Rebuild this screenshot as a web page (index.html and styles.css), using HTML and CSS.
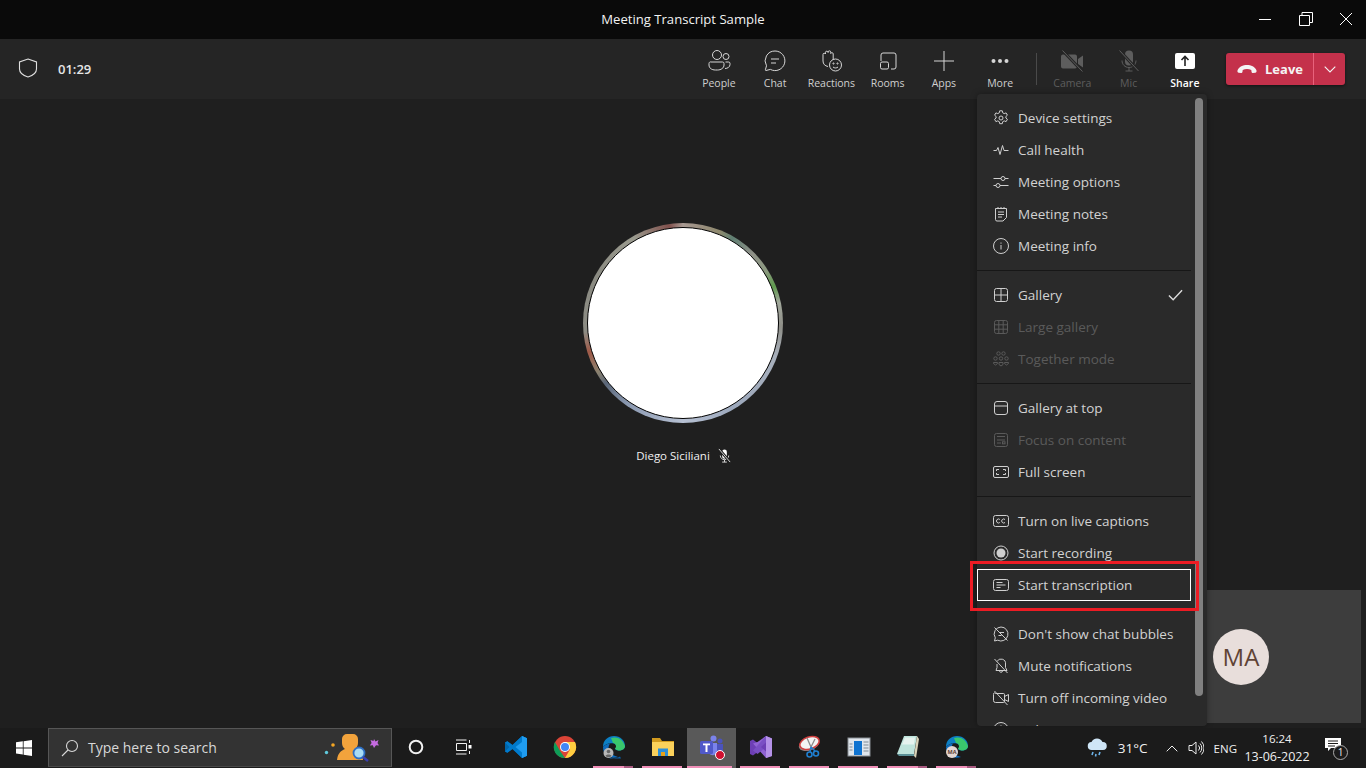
FILE: index.html
```html
<!DOCTYPE html>
<html lang="en">
<head>
<meta charset="utf-8">
<title>Meeting Transcript Sample</title>
<link rel="stylesheet" href="styles.css">
</head>
<body>
<div class="app">
  <header class="titlebar">
    <div class="title">Meeting Transcript Sample</div>
    <div class="winctl">
      <svg class="wi" viewBox="0 0 14 14"><path d="M1 7.500h12"/></svg>
      <svg class="wi" viewBox="0 0 14 14"><path d="M.5 3.500h10v10H.5zM3 3.500V.5h10.500v10h-3"/></svg>
      <svg class="wi" viewBox="0 0 14 14"><path d="M1 1l12 12M13 1L1 13"/></svg>
    </div>
  </header>

  <nav class="toolbar">
    <svg class="shield" viewBox="0 0 20 20"><path d="M10 1l8.500 3v7c0 3.500-3.500 6.500-8.500 8c-5-1.500-8.500-4.500-8.500-8V4z"/></svg>
    <span class="timer">01:29</span>
    <div class="tools">
      <button class="tool">
        <svg class="ti" viewBox="0 0 24 24"><circle cx="10" cy="6" r="4.500"/><circle cx="19" cy="7.500" r="3"/><path d="M4 13h11.500a1.500 1.500 0 0 1 1.500 1.500v1.500c0 3-3 5-6.500 5h-2c-4 0-6.500-2-6.500-5v-1.500A1.500 1.500 0 0 1 4 13z"/><path d="M18.500 13h3a1.500 1.500 0 0 1 1.500 1.500v1c0 2.500-2.500 4-5 4"/></svg>
        <span>People</span>
      </button>
      <button class="tool">
        <svg class="ti" viewBox="0 0 24 24"><path d="M12 2a9.800 9.800 0 1 1-4.600 18.400L3 21.500c-.5 0-.8-.3-.6-.8l1.100-3.900A9.800 9.800 0 0 1 12 2z"/><path d="M8 10h8M8 14h5"/></svg>
        <span>Chat</span>
      </button>
      <button class="tool">
        <svg class="ti" viewBox="0 0 24 24"><path d="M4 7V5.500a1.300 1.300 0 0 1 2.500-.5V3.500a1.300 1.300 0 0 1 2.600 0V3a1.300 1.300 0 0 1 2.600.3v1.200a1.300 1.300 0 0 1 2.500.3V11"/><path d="M4 7v5c0 3 2 5 5 5.500" /><circle cx="16.500" cy="16" r="6"/><path d="M14 18c1.500 1.300 3.500 1.300 5 0"/><circle cx="14.500" cy="14.500" r=".6"/><circle cx="18.500" cy="14.500" r=".6"/></svg>
        <span>Reactions</span>
      </button>
      <button class="tool">
        <svg class="ti" viewBox="0 0 24 24"><path d="M5 12V6a2 2 0 0 1 2-2h11a2 2 0 0 1 2 2v12a2 2 0 0 1-2 2h-3"/><rect x="4.500" y="13" width="8" height="7" rx="1.500"/></svg>
        <span>Rooms</span>
      </button>
      <button class="tool">
        <svg class="ti" viewBox="0 0 24 24"><path d="M12 2v20M2 12h20"/></svg>
        <span>Apps</span>
      </button>
      <button class="tool">
        <svg class="ti" viewBox="0 0 24 24"><circle class="dot" cx="5.500" cy="12" r="2"/><circle class="dot" cx="12" cy="12" r="2"/><circle class="dot" cx="18.500" cy="12" r="2"/></svg>
        <span>More</span>
      </button>
      <div class="tsep"></div>
      <button class="tool off">
        <svg class="ti" viewBox="0 0 24 24"><path class="fill" d="M3 5.500h12a2 2 0 0 1 2 2v10a2 2 0 0 1-2 2H3a2 2 0 0 1-2-2v-10a2 2 0 0 1 2-2zM18 10l5-3.500v12L18 15z"/><path class="gap" d="M2.500 1.500l20 21"/><path d="M2.500 1.500l20 21"/></svg>
        <span>Camera</span>
      </button>
      <button class="tool off">
        <svg class="ti" viewBox="0 0 24 24"><path class="fill" d="M8 5.500a4 4 0 0 1 8 0v7a4 4 0 0 1-8 0z"/><path d="M5 11.500c0 4 3 7 7 7s7-3 7-7M12 18.500V22M8.500 22h7"/><path class="gap" d="M2.500 1.500l19 20.500"/><path d="M2.500 1.500l19 20.500"/></svg>
        <span>Mic</span>
      </button>
      <button class="tool on">
        <svg class="ti" viewBox="0 0 24 24"><rect class="wfill" x="2" y="4" width="20" height="16" rx="2"/><path class="arrow" d="M12 17V8M8.500 11L12 7.500l3.500 3.500"/></svg>
        <span>Share</span>
      </button>
    </div>
    <div class="leave">
      <div class="leave-main">
        <svg class="phone" viewBox="0 0 20 10"><path d="M.5 6.500C2 2.500 6 1 10 1s8 1.500 9.500 5.500c.3 1-.2 2-1.200 2.200l-2.300.3c-.8 0-1.400-.5-1.500-1.300l-.2-1.700C13 5.300 11.500 5 10 5s-3 .3-4.300 1l-.2 1.700C5.400 8.500 4.800 9 4 9l-2.300-.3C.7 8.500.2 7.500.5 6.500z"/></svg>
        <span>Leave</span>
      </div>
      <div class="leave-more"><svg class="chev" viewBox="0 0 12 7"><path d="M.7.700L6 6l5.300-5.300"/></svg></div>
    </div>
  </nav>

  <main class="stage">
    <div class="ring"><div class="disc"></div></div>
    <div class="name">
      <span>Diego Siciliani</span>
      <svg class="namemic" viewBox="0 0 16 16"><path class="wfill" d="M5.500 4a2.500 2.500 0 0 1 5 0v5a2.500 2.500 0 0 1-5 0z"/><path d="M3.500 8c0 2.500 2 4.500 4.500 4.500s4.500-2 4.500-4.500M8 12.500V15M5.500 15h5"/><path class="gapname" d="M2 1l12 14"/><path d="M2 1l12 14"/></svg>
    </div>
  </main>

  <footer class="taskbar">
    <button class="start">
      <svg viewBox="0 0 16 16" class="winlogo"><path d="M0 2.300l6.800-1v6.200H0zM7.600 1.200L16 0v7.500H7.600zM0 8.400h6.800v6.200l-6.800-1zM7.600 8.400H16V16l-8.400-1.200z"/></svg>
    </button>
    <div class="search">
      <svg class="mag" viewBox="0 0 18 18"><circle cx="11" cy="7" r="5.500"/><path d="M7 11l-6 6"/></svg>
      <span class="stext">Type here to search</span>
      <svg class="illus" viewBox="0 0 56 30">
        <circle cx="2.500" cy="19.500" r="1.700" fill="#5fc9dc"/>
        <circle cx="9" cy="12" r="1.800" fill="#f4a623"/>
        <path d="M50 6l1.500 2.500L54.500 7l-1 3 1.500 2.500-3-.2L50 15l-1.200-2.800-3 .2 1.800-2.500L46.500 7l3 1z" fill="#c56be0"/>
        <path d="M23 1h6a5 5 0 0 1 5 5v4c0 3-1.500 5-3 6c3 1.500 7 3 8 11H13c1-8 5-9.500 8-11c-1.500-1-3-3-3-6V6a5 5 0 0 1 5-5z" fill="#f2a33c"/>
        <circle cx="35" cy="20" r="5.500" fill="#a9dcf5" stroke="#2e6fc4" stroke-width="1.800"/>
        <path d="M39 24l5 4" stroke="#3a3fb0" stroke-width="2.500" fill="none"/>
      </svg>
    </div>
    <button class="tb wide"><svg class="cort" viewBox="0 0 16 16"><circle cx="8" cy="8" r="6.300"/></svg></button>
    <button class="tb wide"><svg class="tview" viewBox="0 0 18 16"><path d="M1 1h10.500M1 15h10.500M1.500 4.500h10v7h-10zM14.500 1v3M14.500 12v3"/><rect class="wfill" x="13.500" y="6" width="3" height="3.500"/></svg></button>
    <div class="apps">
      <button class="tb">
        <svg class="ai" viewBox="0 0 24 24"><path fill="#0065a9" d="M23 3.200L18 1 8.500 10 3.400 6.200 1 7.500v9l2.400 1.300 5.100-3.800L18 23l5-2.200z"/><path fill="#007acc" d="M18 1L8.500 10 3.400 6.200 1 7.500l4.500 4.500L1 16.500l2.400 1.300 5.100-3.800L18 23l5-2.200V3.200z"/><path fill="#1f9cf0" d="M18 1l5 2.200v17.600L18 23V7l-6.500 5 6.500 5.500z"/></svg>
      </button>
      <button class="tb">
        <svg class="ai" viewBox="0 0 24 24"><circle cx="12" cy="12" r="11" fill="#db4437"/><path fill="#0f9d58" d="M1.900 7l5.500 9.500 4.600 6.500A11 11 0 0 1 1.900 7z"/><path fill="#ffcd40" d="M12 7h10a11 11 0 0 1-10 16l5-8.500z"/><circle cx="12" cy="12" r="5" fill="#fff"/><circle cx="12" cy="12" r="4" fill="#4285f4"/></svg>
      </button>
      <button class="tb run multi">
        <svg class="ai" viewBox="0 0 24 24"><path fill="#0c7fc4" d="M1 12C1 5 6 1 12 1c6.500 0 11 4.500 11 10 0 3-3 4.500-6 4.500-2.500 0-4-1-4-2 2-.5 2-4-1-5C7 7.500 3.500 9 1 12z"/><path fill="#3ac76d" d="M9 3c6-2 12 1 14 8 0 3-3 4.500-6 4.500-1 0-3-.5-4-2 2-1.500 1-5-2-5.500z"/><path fill="#0b5ea8" d="M5 21c3 2.500 9 3 13 .5l1 2H8z"/><path fill="#0f6cbd" d="M1 12c3-3 5-3.500 7-3.500-3 4-2 11 8 13.500-6 2-15 0-15-10z"/><circle cx="6.500" cy="18" r="5" fill="#b8b8b8"/><circle cx="6.500" cy="16.500" r="1.800" fill="#666"/><path fill="#666" d="M3.500 21c.5-2 5.500-2 6 0a4 4 0 0 1-6 0z"/></svg>
      </button>
      <button class="tb run">
        <svg class="ai" viewBox="0 0 24 24"><path fill="#d29b1f" d="M1 3h8l2 3h12v4H1z"/><path fill="#fbd15b" d="M1 7h22v14H1z"/><path fill="#2d8fd8" d="M7 13.500h10V21h-3v-4h-4v4H7z"/><path fill="#e6a21a" d="M10 17h4v4h-4z"/></svg>
      </button>
      <button class="tb run active">
        <svg class="ai" viewBox="0 0 24 24"><circle cx="13.500" cy="3.500" r="3" fill="#7b83eb"/><circle cx="20" cy="6" r="2.500" fill="#4b53bc"/><path fill="#7b83eb" d="M8 8h9v10a5 5 0 0 1-9-2z"/><path fill="#4b53bc" d="M17 9h6v6.500a3.500 3.500 0 0 1-6 .5z"/><rect x="0" y="6" width="13" height="13" rx="1.500" fill="#5059c9"/><path fill="#fff" d="M3 8.500h7v1.800H7.500V17h-2v-6.700H3z"/></svg>
        <span class="rec"></span>
      </button>
      <button class="tb run">
        <svg class="ai" viewBox="0 0 24 24"><path fill="#6d3fb5" d="M8.500 17L4 20.500 1 19V6l3-1.500L8.500 8z"/><path fill="#9063d3" d="M17 1l6 2.500v17.500L17 23 4 8.500 8.500 7z"/><path fill="#7a4fc4" d="M17 1L4 15.500 8.500 19 17 12z"/><path fill="#b592e8" d="M17 1l6 2.500v17.500L17 23z"/><path fill="#6d3fb5" d="M17 7.500l-5 4.500 5 4.500z"/></svg>
      </button>
      <button class="tb run">
        <svg class="ai" viewBox="0 0 24 24"><ellipse cx="11" cy="9.500" rx="10.500" ry="6" fill="#8d8583" transform="rotate(-18 11 9.500)"/><ellipse cx="11.500" cy="8" rx="10" ry="6" fill="#f4f4f4" stroke="#d04040" stroke-width="1.500" transform="rotate(-18 11.500 8)"/><path d="M9 3l4 9M17 4l-4 8" stroke="#8b8b8b" stroke-width="1.300" fill="none"/><path d="M13 12l-1 5M13 12l4 4" stroke="#1f7fd0" stroke-width="1.500" fill="none"/><circle cx="11.500" cy="19.500" r="2.500" fill="none" stroke="#1f7fd0" stroke-width="1.600"/><circle cx="18" cy="18.500" r="2.500" fill="none" stroke="#1f7fd0" stroke-width="1.600"/></svg>
      </button>
      <button class="tb run">
        <svg class="ai" viewBox="0 0 24 24"><rect x="1" y="3" width="22" height="18" fill="#e0e6ec" stroke="#8a8f95"/><rect x="7" y="6" width="8" height="14" fill="#0f73d0"/><path d="M16.500 7h5M16.500 10h5M16.500 13h5M16.500 16h5M2.500 9h3M2.500 12h3M2.500 15h3" stroke="#7f8b96" fill="none"/></svg>
      </button>
      <button class="tb run multi">
        <svg class="ai" viewBox="0 0 24 24"><path fill="#bfe4dc" d="M8 1h13l-3 18H1z"/><path fill="#5b8f96" d="M1 19h17l1 2H3z"/><path fill="#e6f3ef" d="M9 2.500h10l-1 7H6z"/><path fill="#d8d2b8" d="M18 21l3-20 2 3-3 19z"/></svg>
      </button>
      <button class="tb run multi">
        <svg class="ai" viewBox="0 0 24 24"><path fill="#0c7fc4" d="M1 12C1 5 6 1 12 1c6.500 0 11 4.500 11 10 0 3-3 4.500-6 4.500-2.500 0-4-1-4-2 2-.5 2-4-1-5C7 7.500 3.500 9 1 12z"/><path fill="#3ac76d" d="M9 3c6-2 12 1 14 8 0 3-3 4.500-6 4.500-1 0-3-.5-4-2 2-1.500 1-5-2-5.500z"/><path fill="#0f6cbd" d="M1 12c3-3 5-3.500 7-3.500-3 4-2 11 8 13.500-6 2-15 0-15-10z"/><circle cx="7" cy="17" r="6" fill="#e4d8d4"/><text class="mini" x="7" y="19" text-anchor="middle">MA</text></svg>
      </button>
    </div>
    <div class="tray">
      <svg class="weather" viewBox="0 0 22 22"><path fill="#cfe6f7" d="M6 13a4 4 0 0 1-.5-8A6 6 0 0 1 16.500 5 4 4 0 0 1 17 13z"/><path d="M7 15l-1 3M14 15l-1 3M10 17l-.5 2.500" stroke="#6db3e8" stroke-width="1.600" fill="none"/></svg>
      <span class="temp">31°C</span>
      <svg class="up" viewBox="0 0 12 7"><path d="M.7 6.300L6 1l5.300 5.300"/></svg>
      <svg class="speaker" viewBox="0 0 16 16"><path d="M1 5.500h3L8 2v12l-4-3.500H1zM10.500 5.500a3.500 3.500 0 0 1 0 5M12 3.500a6.500 6.500 0 0 1 0 9M13.500 1.500a9.500 9.500 0 0 1 0 13"/></svg>
      <span class="lang">ENG</span>
      <div class="clock"><span class="time">16:24</span><span class="date">13-06-2022</span></div>
      <div class="notif">
        <svg class="bubble" viewBox="0 0 16 16"><path class="wfill" d="M0 1h16v10H6l-3 3v-3H0z"/><path class="lines" d="M3 4h10M3 6.500h10M3 9h7"/></svg>
        <span class="badge">1</span>
      </div>
    </div>
  </footer>

  <section class="selftile"><div class="ma">MA</div></section>

  <aside class="menu">
    <div class="list">
      <div class="group">
        <div class="item"><svg class="mi" viewBox="0 0 16 16"><path d="M6.700.800h2.600l.4 2 1.500.8 1.900-.7 1.300 2.300-1.500 1.300v1.500l1.500 1.300-1.300 2.300-1.900-.7-1.500.8-.4 2H6.700l-.4-2-1.500-.8-1.900.7-1.300-2.300 1.500-1.300V6.500L1.600 5.200l1.300-2.300 1.900.7 1.500-.8z"/><circle cx="8" cy="8" r="2"/></svg><span>Device settings</span></div>
        <div class="item"><svg class="mi" viewBox="0 0 16 16"><path d="M.5 8.500h3l1.500-3 2 7 2.500-9 1.500 5h4.500"/></svg><span>Call health</span></div>
        <div class="item"><svg class="mi" viewBox="0 0 16 16"><path d="M.5 4.500h7.500M12 4.500h3.500M.5 11.500h2.500M7 11.500h8.500"/><circle cx="10" cy="4.500" r="2"/><circle cx="5" cy="11.500" r="2"/></svg><span>Meeting options</span></div>
        <div class="item"><svg class="mi" viewBox="0 0 16 16"><path d="M2.500 2.500h11v9l-3.500 3.500H4a1.500 1.500 0 0 1-1.500-1.500zM5 1v2M8 1v2M11 1v2M5 6h6M5 8.500h6M5 11h4"/></svg><span>Meeting notes</span></div>
        <div class="item"><svg class="mi" viewBox="0 0 16 16"><circle cx="8" cy="8" r="7.500"/><path d="M8 7v4.500M8 4.500v1.200"/></svg><span>Meeting info</span></div>
      </div>
      <div class="group">
        <div class="item"><svg class="mi" viewBox="0 0 16 16"><rect x="1.500" y="1.500" width="13" height="13" rx="2"/><path d="M8 1.500v13M1.500 8h13"/></svg><span>Gallery</span><svg class="check" viewBox="0 0 16 12"><path d="M1 6.500L5.500 11 15 1"/></svg></div>
        <div class="item dis"><svg class="mi" viewBox="0 0 16 16"><rect x="1.500" y="1.500" width="13" height="13" rx="2"/><path d="M5.800 1.500v13M10.200 1.500v13M1.500 5.800h13M1.500 10.200h13"/></svg><span>Large gallery</span></div>
        <div class="item dis"><svg class="mi" viewBox="0 0 16 16"><circle cx="5.500" cy="2.500" r="1.700"/><circle cx="10.500" cy="2.500" r="1.700"/><circle cx="2.500" cy="7.500" r="1.700"/><circle cx="8" cy="7.500" r="1.700"/><circle cx="13.500" cy="7.500" r="1.700"/><path d="M.5 11.500h4v1l-2 1.500-2-1.500zM6 11.500h4v2l-2 1.500-2-1.500zM11.500 11.500h4v1l-2 1.500-2-1.500z"/></svg><span>Together mode</span></div>
      </div>
      <div class="group">
        <div class="item"><svg class="mi" viewBox="0 0 16 16"><rect x="1.500" y="1.500" width="13" height="13" rx="2.500"/><path d="M1.500 6h13"/></svg><span>Gallery at top</span></div>
        <div class="item dis"><svg class="mi" viewBox="0 0 16 16"><rect x="1.500" y="1.500" width="13" height="13" rx="2"/><path d="M4 4.500h8M4 8h8M4 11h4"/><rect x="9.500" y="9.800" width="2.500" height="2"/></svg><span>Focus on content</span></div>
        <div class="item"><svg class="mi" viewBox="0 0 16 16"><rect x=".5" y="2.500" width="15" height="11" rx="1.500"/><path d="M3.500 7v-1.500h2.500M10 5.500h2.500V7M12.500 9v1.500H10M6 10.500H3.500V9"/></svg><span>Full screen</span></div>
      </div>
      <div class="group">
        <div class="item"><svg class="mi" viewBox="0 0 16 16"><rect x=".5" y="2.500" width="15" height="11" rx="2"/><path d="M6.800 6.500a2 2 0 1 0 0 3M12 6.500a2 2 0 1 0 0 3"/></svg><span>Turn on live captions</span></div>
        <div class="item"><svg class="mi" viewBox="0 0 16 16"><circle cx="8" cy="8" r="7"/><circle class="mfill" cx="8" cy="8" r="4.500"/></svg><span>Start recording</span></div>
        <div class="item focus"><svg class="mi" viewBox="0 0 16 16"><rect x=".5" y="2.500" width="15" height="11" rx="2"/><path d="M3.500 5.500h6M3.500 8h9M3.500 10.500h4"/></svg><span>Start transcription</span></div>
      </div>
      <div class="group">
        <div class="item"><svg class="mi" viewBox="0 0 16 16"><path d="M8 1a7 7 0 1 1-3.300 13.200L1.500 15l.8-3.200A7 7 0 0 1 8 1zM1.500 1.500l13 13M6 6.500h5M5.500 9.500h3"/></svg><span>Don't show chat bubbles</span></div>
        <div class="item"><svg class="mi" viewBox="0 0 16 16"><path d="M4 3.500A4.500 4.500 0 0 1 12.500 6v3.500l1.500 3H3l1-3V6M6.500 12.500a1.500 1.500 0 0 0 3 .5M1.500 1l13 14"/></svg><span>Mute notifications</span></div>
        <div class="item"><svg class="mi" viewBox="0 0 16 16"><path d="M2.500 3.500h8a1 1 0 0 1 1 1v7a1 1 0 0 1-1 1h-8a2 2 0 0 1-2-2v-6a1 1 0 0 1 2-1zM11.500 6.500l4-2v7l-4-2zM1.500 1l13 14"/></svg><span>Turn off incoming video</span></div>
        <div class="item"><svg class="mi" viewBox="0 0 16 16"><circle cx="8" cy="8" r="7.500"/><path d="M6 6a2 2 0 1 1 3 1.800c-.7.400-1 .8-1 1.700M8 11.500v1"/></svg><span>Help</span></div>
      </div>
    </div>
    <div class="thumb"></div>
  </aside>

  <div class="callout"></div>
</div>
</body>
</html>
```

FILE: styles.css
```css
* { box-sizing: border-box; }
html, body { margin: 0; padding: 0; }
body { background: #1f1f1f; font-family: "Open Sans", "Noto Sans", sans-serif; overflow: hidden; }
button { background: none; border: 0; padding: 0; margin: 0; color: inherit; font: inherit; }
svg { display: block; flex: none; }

.app { position: relative; width: 1366px; height: 768px; display: flex; flex-direction: column; overflow: hidden; }

/* title bar */
.titlebar { height: 39px; background: #0a0a0a; position: relative; display: flex; justify-content: center; align-items: flex-start; flex: none; }
.title { color: #f2f2f2; font-size: 13.100px; line-height: 38px; height: 38px; }
.winctl { position: absolute; right: 0; top: 0; height: 38px; display: flex; align-items: center; }
.wi { width: 14px; height: 14px; margin: 0 13px; fill: none; stroke: #fff; stroke-width: 1; }
.winctl .wi:first-child { margin-right: 14px; }

/* toolbar */
.toolbar { height: 60px; flex: none; background: #252525; display: flex; align-items: flex-start; padding: 0 21px 0 18px; }
.shield { width: 20px; height: 20px; margin-top: 19px; fill: none; stroke: #e0e0e0; stroke-width: 1.100; }
.timer { margin-left: 20px; margin-top: 21px; font-size: 13px; line-height: 18px; font-weight: 600; color: #e6e6e6; }
.tools { margin-left: auto; display: flex; align-items: flex-start; }
.tool { width: 56.250px; height: 59px; padding-top: 10px; display: flex; flex-direction: column; align-items: center; color: #cfcfcf; font-size: 10.500px; line-height: 14px; }
.tool span { margin-top: 3px; white-space: nowrap; }
.ti { width: 24px; height: 24px; fill: none; stroke: #d6d6d6; stroke-width: 1; }
.ti .dot { fill: #d6d6d6; stroke: none; }
.tool.off { color: #5d5d5d; }
.tool.off .ti { stroke: #5d5d5d; }
.tool.off .fill { fill: #5d5d5d; stroke: none; }
.tool.off .gap { stroke: #252525; stroke-width: 3; }
.tool.on { color: #fff; font-weight: 600; }
.wfill { fill: #fff; stroke: none; }
.arrow { stroke: #222; stroke-width: 1.600; fill: none; }
.tsep { width: 1px; height: 32px; margin: 14px 7px 0 8px; background: #4a4a4a; }

.leave { width: 119px; height: 32px; margin: 14px 0 0 13px; background: #c4314b; border-radius: 3px; display: flex; color: #f4f4f4; box-shadow: 0 1px 3px rgba(0,0,0,.5); }
.leave-main { width: 87px; display: flex; align-items: center; padding-left: 11px; font-size: 13px; font-weight: 700; }
.leave-main span { margin-left: 8px; }
.phone { width: 20px; height: 10px; fill: #f4f4f4; }
.leave-more { flex: 1; border-left: 1px solid #e8627c; display: flex; align-items: center; justify-content: center; }
.chev { width: 12px; height: 7px; fill: none; stroke: #f4f4f4; stroke-width: 1.100; }

/* stage */
.stage { flex: 1; min-height: 0; background: #1f1f1f; display: flex; flex-direction: column; align-items: center; padding-top: 124px; }
.ring { width: 200px; height: 200px; border-radius: 50%; padding: 4px; background: conic-gradient(from 0deg, #a89a92 0deg, #9a8f80 10deg, #8f8a6e 22deg, #5f7f72 30deg, #8f9088 45deg, #8c9a80 58deg, #5f9a4e 68deg, #a2a89c 78deg, #8f8f88 92deg, #a8b0bc 110deg, #9ca8bc 150deg, #b6c0d2 180deg, #8a98b0 215deg, #5a6678 232deg, #8b8270 240deg, #a05a48 253deg, #8c8c84 265deg, #8b8b82 300deg, #9a9a8e 330deg, #80504c 352deg, #a89a92 360deg); }
.disc { width: 100%; height: 100%; border-radius: 50%; background: #fff; border: 1.500px solid #000; }
.name { margin-top: 24px; display: flex; align-items: center; margin-left: 2px; color: #f0f0f0; font-size: 11.500px; line-height: 17px; }
.namemic { width: 15px; height: 15px; margin-left: 7px; fill: none; stroke: #dedede; stroke-width: 1; }
.gapname { stroke: #1f1f1f; stroke-width: 3; }

/* self tile */
.selftile { position: absolute; left: 1207px; top: 590px; width: 154px; height: 133px; background: #3d3d3d; display: flex; align-items: center; padding-left: 6px; }
.ma { width: 56px; height: 56px; border-radius: 50%; background: #e8dedb; color: #5f4335; font-size: 24px; line-height: 56px; text-align: center; }

/* menu */
.menu { position: absolute; left: 977px; top: 94px; width: 230px; height: 632px; background: #2a2a2a; border-radius: 4px; overflow: hidden; display: flex; align-items: flex-start; box-shadow: 0 0 6px rgba(0,0,0,.35); }
.list { width: 214px; padding-top: 8px; flex: none; }
.group { padding: 0 0 8px; border-bottom: 1px solid #171717; margin-bottom: 8px; }
.group:last-child { border-bottom: 0; }
.item { height: 32px; display: flex; align-items: center; padding-left: 16px; color: #d2d2d2; font-size: 13.500px; white-space: nowrap; }
.item.dis { color: #5a5a5a; }
.mi { width: 16px; height: 16px; fill: none; stroke: #cfcfcf; stroke-width: 1; margin-right: 9px; }
.dis .mi { stroke: #5a5a5a; }
.mfill { fill: #cfcfcf; stroke: none; }
.check { width: 15px; height: 12px; margin-left: auto; margin-right: 8px; fill: none; stroke: #dcdcdc; stroke-width: 1.500; }
.item.focus { outline: 1px solid #fff; outline-offset: -1px; }
.thumb { width: 8px; height: 598px; margin: 4px 0 0 4px; background: #808080; border-radius: 4px; flex: none; }

.callout { position: absolute; left: 970px; top: 561px; width: 229px; height: 50px; border: 3px solid #ed1c24; }

/* taskbar */
.taskbar { height: 40px; flex: none; background: #1b1b1b; display: flex; align-items: stretch; color: #f0f0f0; position: relative; z-index: 3; }
.start { width: 48px; display: flex; align-items: center; justify-content: center; }
.winlogo { width: 16px; height: 16px; fill: #fff; }
.search { width: 344px; height: 39px; background: #333; border: 1px solid #565656; border-bottom-color: #484848; display: flex; align-items: center; padding-left: 12px; }
.mag { width: 18px; height: 18px; fill: none; stroke: #d8d8d8; stroke-width: 1.100; }
.stext { margin-left: 9px; font-size: 14px; color: #d8d8d8; }
.illus { width: 56px; height: 30px; margin-left: auto; margin-right: 11px; }
.tb { width: 49px; height: 40px; display: flex; align-items: center; justify-content: center; position: relative; padding-bottom: 2px; }
.tb.wide { width: 48px; }
.cort { width: 16px; height: 16px; fill: none; stroke: #f2f2f2; stroke-width: 2; }
.tview { width: 18px; height: 16px; fill: none; stroke: #f2f2f2; stroke-width: 1; }
.apps { display: flex; margin-left: 3px; margin-right: 0; }
.ai { width: 24px; height: 24px; }
.mini { font-size: 5.500px; font-weight: 700; fill: #5f4335; }
.run::after { content: ""; position: absolute; left: 4px; right: 5px; bottom: 0; height: 2px; background: #f08fb8; }
.multi::after { background: linear-gradient(to right, #f08fb8 78%, #a85a80 78%); }
.active { background: #595959; }
.active::after { left: 0; right: 4px; }
.rec { position: absolute; left: 28px; top: 22px; width: 10px; height: 10px; border-radius: 50%; background: #d01030; border: 1px solid #fff; }
.tray { margin-left: auto; display: flex; align-items: center; padding-right: 19px; }
.weather { width: 22px; height: 22px; }
.temp { margin-left: 10px; font-size: 13.500px; }
.up { width: 12px; height: 7px; margin-left: 18px; fill: none; stroke: #eee; stroke-width: 1; }
.speaker { width: 16px; height: 16px; margin-left: 10px; fill: none; stroke: #eee; stroke-width: 1; }
.lang { margin-left: 10px; font-size: 11.500px; }
.clock { margin-left: 3px; width: 74px; display: flex; flex-direction: column; align-items: center; line-height: 18px; }
.time { font-size: 11.500px; }
.date { font-size: 12.500px; }
.notif { margin-left: 11px; position: relative; width: 22px; height: 24px; }
.bubble { width: 16px; height: 16px; margin-top: 1px; }
.lines { stroke: #1b1b1b; stroke-width: 1; fill: none; }
.badge { position: absolute; left: 8px; top: 9px; width: 15px; height: 15px; border-radius: 50%; background: #1b1b1b; border: 1px solid #aaa; font-size: 10px; line-height: 13px; text-align: center; color: #eee; }
```
